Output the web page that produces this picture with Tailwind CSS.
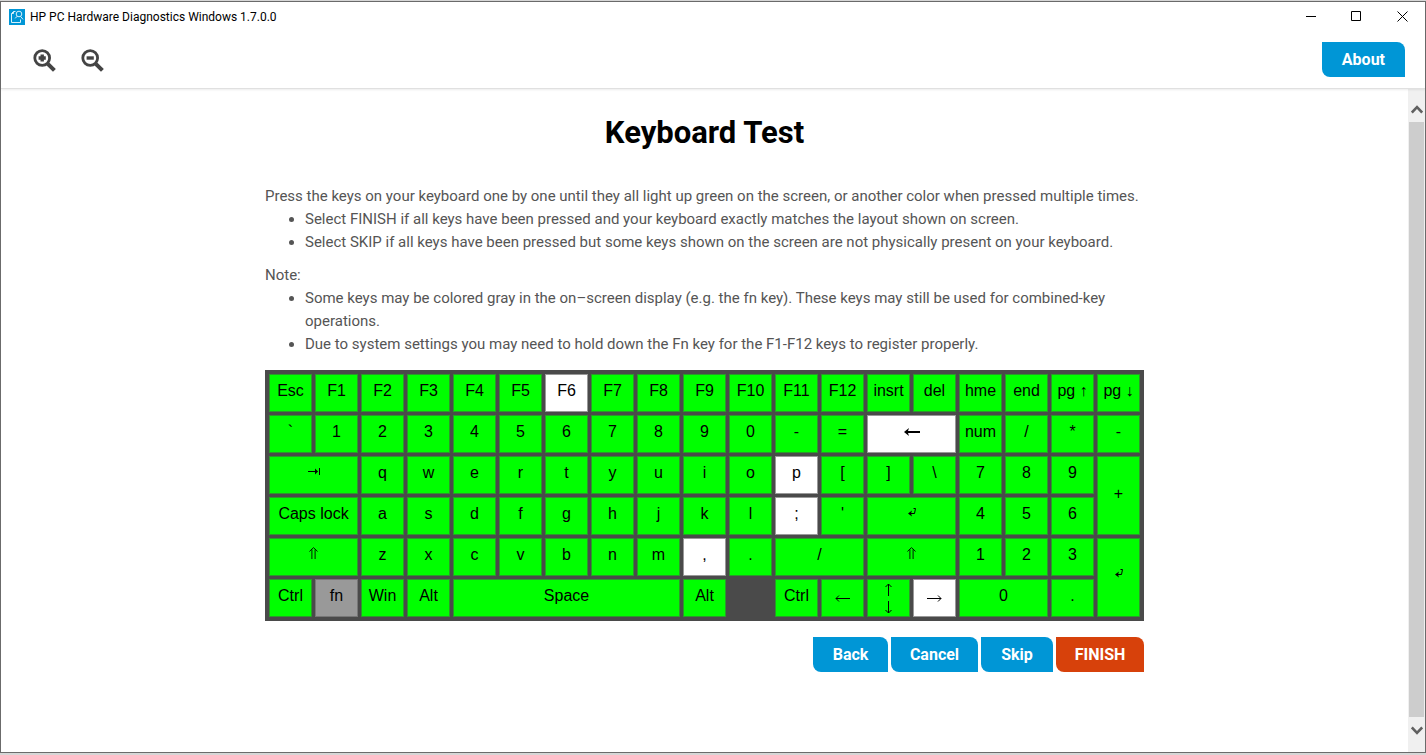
<!DOCTYPE html>
<html lang="en">
<head>
<meta charset="utf-8">
<title>HP PC Hardware Diagnostics Windows 1.7.0.0</title>
<script src="https://cdn.jsdelivr.net/npm/@tailwindcss/browser@4"></script>
</head>
<body class="flex h-screen flex-col overflow-hidden bg-[#d6d6d6] pt-px pb-[2px] font-['Roboto',sans-serif]">
<div class="flex min-h-0 grow flex-col border border-[#6b6b6b] bg-white">

  <header class="z-10 border-b border-[#e0e0e0] shadow-[0_1px_2px_rgba(0,0,0,0.08)]">
    <div class="flex h-[29px] items-center justify-between pl-2">
      <div class="flex items-center gap-[5px]">
        <svg class="size-4" viewBox="0 0 16 16" fill="none" stroke="#d8f0fb" aria-hidden="true">
          <rect width="16" height="16" fill="#0096d6" stroke="none"/>
          <path d="M6.5 2.5H4.5L2.5 4.5V13.5H11.5V10.5M2.5 4.5H4.5V2.5"/>
          <circle cx="10" cy="5" r="2.8"/>
          <path d="M8.2 7.2L6.2 9.4M11.6 7.4L14 10.4"/>
        </svg>
        <span class="text-xs leading-4 text-black">HP PC Hardware Diagnostics Windows 1.7.0.0</span>
      </div>
      <div class="flex">
        <button aria-label="Minimize" class="grid h-7 w-[46px] place-items-center"><svg class="size-[11px]" viewBox="0 0 11 11" stroke="#000"><path d="M0 5.5H10"/></svg></button>
        <button aria-label="Maximize" class="grid h-7 w-[45px] place-items-center"><svg class="size-[11px]" viewBox="0 0 11 11" stroke="#000" fill="none"><path d="M.5.5H9.5V9.5H.5Z"/></svg></button>
        <button aria-label="Close" class="grid h-7 w-[46px] place-items-center"><svg class="size-[11px]" viewBox="0 0 11 11" stroke="#000"><path d="M.5.5L10.5 10.5M10.5.5L.5 10.5"/></svg></button>
      </div>
    </div>
    <div class="flex h-[57px] items-center justify-between pr-5 pl-8">
      <div class="flex gap-6 pt-[3px]">
        <button aria-label="Zoom in"><svg class="size-6" viewBox="0 0 24 24" fill="none" stroke="#444"><circle cx="9.2" cy="9" r="7.4" stroke-width="2.8"/><path d="M14.8 14.8L21.4 21.4" stroke-width="4"/><path d="M9.2 5.4V12.6M5.6 9H12.8" stroke-width="3.4"/></svg></button>
        <button aria-label="Zoom out"><svg class="size-6" viewBox="0 0 24 24" fill="none" stroke="#444"><circle cx="9.2" cy="9" r="7.4" stroke-width="2.8"/><path d="M14.8 14.8L21.4 21.4" stroke-width="4"/><path d="M5.6 9H12.8" stroke-width="3.4"/></svg></button>
      </div>
      <button class="h-[35px] min-w-[83px] rounded-tr-lg rounded-bl-lg bg-[#0096d6] px-5 text-base font-bold text-white">About</button>
    </div>
  </header>

  <div class="flex min-h-0 grow">
    <main class="min-w-0 grow overflow-hidden">
      <div class="mx-auto w-full max-w-[879px]">
        <h1 class="pt-6 text-center text-[31px] leading-10 font-bold text-black">Keyboard Test</h1>
        <div class="mt-8 text-[15px] leading-[23px] text-[#555]">
          <p>Press the keys on your keyboard one by one until they all light up green on the screen, or another color when pressed multiple times.</p>
          <ul class="list-disc pl-10">
            <li>Select FINISH if all keys have been pressed and your keyboard exactly matches the layout shown on screen.</li>
            <li>Select SKIP if all keys have been pressed but some keys shown on the screen are not physically present on your keyboard.</li>
          </ul>
          <p class="mt-[10px]">Note:</p>
          <ul class="list-disc pl-10">
            <li>Some keys may be colored gray in the on–screen display (e.g. the fn key). These keys may still be used for combined-key<br>operations.</li>
            <li>Due to system settings you may need to hold down the Fn key for the F1-F12 keys to register properly.</li>
          </ul>
        </div>

        <div class="mt-[14px] grid auto-rows-[38px] grid-cols-19 gap-[3px] bg-[#4a4a4a] p-1 font-['Liberation_Sans',sans-serif] text-base leading-[18px] text-black [&>span]:flex [&>span]:items-center [&>span]:justify-center [&>span]:border [&>span]:border-[#2a9a2a] [&>span]:bg-[#0f0] [&>span]:pb-1 [&>span]:whitespace-nowrap">
          <span>Esc</span><span>F1</span><span>F2</span><span>F3</span><span>F4</span><span>F5</span><span class="border-[#999]! bg-white!">F6</span><span>F7</span><span>F8</span><span>F9</span><span>F10</span><span>F11</span><span>F12</span><span>insrt</span><span>del</span><span>hme</span><span>end</span><span>pg ↑</span><span>pg ↓</span>

          <span>`</span><span>1</span><span>2</span><span>3</span><span>4</span><span>5</span><span>6</span><span>7</span><span>8</span><span>9</span><span>0</span><span>-</span><span>=</span><span class="col-span-2 border-[#999]! bg-white!"><svg class="h-2 w-4" viewBox="0 0 16 8" role="img" aria-label="Backspace"><path d="M0 4L5 0L4 3H16V5H4L5 8Z"/></svg></span><span>num</span><span>/</span><span>*</span><span>-</span>

          <span class="col-span-2"><svg class="mb-1 h-[7px] w-3" viewBox="0 0 12 7" fill="none" stroke="#000" role="img" aria-label="Tab"><path d="M0 3.5H9.5M11.5 0V7"/><path d="M7 .5L10 3.5L7 6.5Z" fill="#000" stroke="none"/></svg></span><span>q</span><span>w</span><span>e</span><span>r</span><span>t</span><span>y</span><span>u</span><span>i</span><span>o</span><span class="border-[#999]! bg-white!">p</span><span>[</span><span>]</span><span>\</span><span>7</span><span>8</span><span>9</span><span class="row-span-2">+</span>

          <span class="col-span-2">Caps lock</span><span>a</span><span>s</span><span>d</span><span>f</span><span>g</span><span>h</span><span>j</span><span>k</span><span>l</span><span class="border-[#999]! bg-white!">;</span><span>'</span><span class="col-span-2"><svg class="mb-1 h-[9px] w-2" viewBox="0 0 8 9" fill="none" stroke="#000" role="img" aria-label="Enter"><path d="M5.5 .5H7.5L6.5 5.5H1"/><path d="M4 2.5L0 5.5L4 8.5L3 5.5Z" fill="#000" stroke="none"/></svg></span><span>4</span><span>5</span><span>6</span>

          <span class="col-span-2"><svg class="mb-1 h-3 w-[9px]" viewBox="0 0 9 12" fill="none" stroke="#000" role="img" aria-label="Shift"><path d="M.4 4.5L4.5 .6L8.6 4.5M2.9 2.5V12M6.1 2.5V12" stroke-width=".9"/></svg></span><span>z</span><span>x</span><span>c</span><span>v</span><span>b</span><span>n</span><span>m</span><span class="border-[#999]! bg-white!">,</span><span>.</span><span class="col-span-2">/</span><span class="col-span-2"><svg class="mb-1 h-3 w-[9px]" viewBox="0 0 9 12" fill="none" stroke="#000" role="img" aria-label="Shift"><path d="M.4 4.5L4.5 .6L8.6 4.5M2.9 2.5V12M6.1 2.5V12" stroke-width=".9"/></svg></span><span>1</span><span>2</span><span>3</span><span class="row-span-2"><svg class="mb-1 h-[9px] w-2" viewBox="0 0 8 9" fill="none" stroke="#000" role="img" aria-label="Enter"><path d="M5.5 .5H7.5L6.5 5.5H1"/><path d="M4 2.5L0 5.5L4 8.5L3 5.5Z" fill="#000" stroke="none"/></svg></span>

          <span>Ctrl</span><span class="border-[#777]! bg-[#999]!">fn</span><span>Win</span><span>Alt</span><span class="col-span-5">Space</span><span>Alt</span><span class="invisible"></span><span>Ctrl</span><span class="pb-0!"><svg class="h-[7px] w-[15px]" viewBox="0 0 15 7" fill="none" stroke="#000" role="img" aria-label="Left"><path d="M1 3.5H15M4 .5L1 3.5L4 6.5"/></svg></span><span class="flex-col gap-[5px] pb-0!"><svg class="h-[13px] w-[7px]" viewBox="0 0 7 13" fill="none" stroke="#000" role="img" aria-label="Up"><path d="M3.5 1V13M.5 4L3.5 1L6.5 4"/></svg><svg class="h-[13px] w-[7px]" viewBox="0 0 7 13" fill="none" stroke="#000" role="img" aria-label="Down"><path d="M3.5 0V12M.5 9L3.5 12L6.5 9"/></svg></span><span class="border-[#999]! bg-white! pb-0!"><svg class="h-[7px] w-[15px]" viewBox="0 0 15 7" fill="none" stroke="#000" role="img" aria-label="Right"><path d="M0 3.5H14M11 .5L14 3.5L11 6.5"/></svg></span><span class="col-span-2">0</span><span>.</span>
        </div>

        <div class="mt-4 flex justify-end gap-[3px] text-base font-bold text-white">
          <button class="h-[35px] min-w-[75px] rounded-tr-lg rounded-bl-lg bg-[#0096d6] px-4 pt-px">Back</button>
          <button class="h-[35px] min-w-[87px] rounded-tr-lg rounded-bl-lg bg-[#0096d6] px-4 pt-px">Cancel</button>
          <button class="h-[35px] min-w-[72px] rounded-tr-lg rounded-bl-lg bg-[#0096d6] px-4 pt-px">Skip</button>
          <button class="h-[35px] min-w-[88px] rounded-tr-lg rounded-bl-lg bg-[#d7410b] px-4 pt-px">FINISH</button>
        </div>
      </div>
    </main>

    <div class="flex w-[17px] shrink-0 flex-col bg-[#f0f0f0] px-px">
      <button aria-label="Scroll up" class="flex h-[33px] items-end justify-center pb-2"><svg class="h-[9px] w-3" viewBox="0 0 12 9" fill="none" stroke="#606060" stroke-width="2.6"><path d="M.8 7.6L6 2.2L11.2 7.6"/></svg></button>
      <div class="grow bg-[#cdcdcd]"></div>
      <button aria-label="Scroll down" class="flex h-[35px] items-start justify-center pt-[9px]"><svg class="h-[9px] w-3" viewBox="0 0 12 9" fill="none" stroke="#606060" stroke-width="2.6"><path d="M.8 1.4L6 6.8L11.2 1.4"/></svg></button>
    </div>
  </div>
</div>
</body>
</html>
